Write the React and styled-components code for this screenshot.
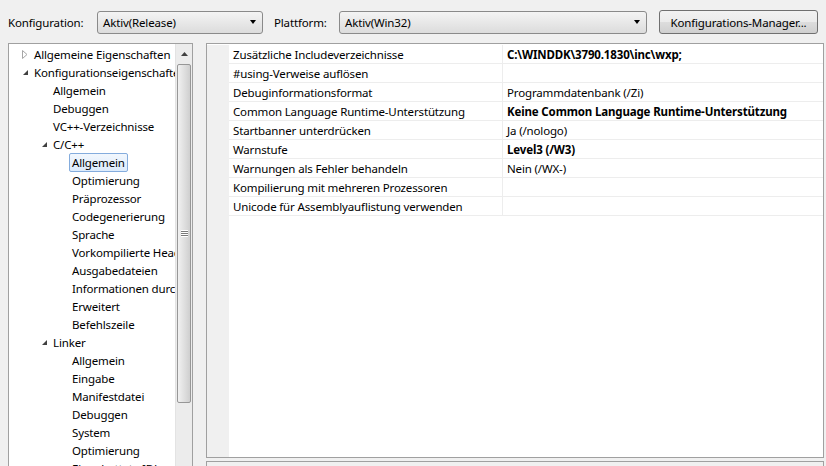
import React from 'react';
import styled, { createGlobalStyle } from 'styled-components';

const GlobalStyle = createGlobalStyle`
  html, body {
    margin: 0;
    padding: 0;
    background: #f0f0f0;
  }
  body {
    font-family: "Noto Sans", "Open Sans", sans-serif;
    font-size: 11.5px;
    letter-spacing: -0.15px;
    color: #000;
  }
`;

const Window = styled.div`
  width: 826px;
  height: 466px;
  overflow: hidden;
  background: #f0f0f0;
  display: flex;
  flex-direction: column;
`;

const Toolbar = styled.div`
  flex: none;
  height: 43px;
  display: flex;
  align-items: center;
  padding: 1px 8px 0;
  box-sizing: border-box;
`;

const Label = styled.span`
  width: ${(p) => p.w}px;
  flex: none;
  white-space: nowrap;
`;

const Combo = styled.div`
  width: ${(p) => p.w}px;
  height: 23px;
  box-sizing: border-box;
  border: 1px solid #8a8a8a;
  border-radius: 3px;
  background: linear-gradient(#f4f4f4, #e8e8e8 50%, #dcdcdc);
  display: flex;
  align-items: center;
  padding: 0 6px 0 5px;
  margin-right: ${(p) => p.gap}px;
`;

const ComboText = styled.span`
  flex: 1;
`;

const Arrow = styled.span`
  width: 0;
  height: 0;
  border-left: 3.5px solid transparent;
  border-right: 3.5px solid transparent;
  border-top: 4px solid #000;
`;

const Button = styled.div`
  width: 159px;
  height: 24px;
  box-sizing: border-box;
  border: 1px solid #707070;
  border-radius: 3px;
  background: linear-gradient(#f2f2f2, #ebebeb 50%, #dddddd 51%, #cfcfcf);
  display: flex;
  align-items: center;
  justify-content: center;
  margin-left: auto;
`;

const Body = styled.div`
  flex: 1;
  min-height: 0;
  display: flex;
  padding-left: 8px;
  gap: 13px;
`;

const TreePanel = styled.div`
  width: 185px;
  height: 423px;
  box-sizing: border-box;
  border: 1px solid #a0a0a0;
  border-bottom: none;
  background: #fff;
  display: flex;
`;

const TreeList = styled.div`
  flex: 1;
  overflow: hidden;
  padding-top: 1px;
`;

const TreeRow = styled.div`
  height: 18px;
  display: flex;
  align-items: center;
  padding-left: ${(p) => 13 + p.level * 19}px;
  white-space: nowrap;
`;

const Toggle = styled.span`
  width: 12px;
  flex: none;
  display: flex;
  align-items: center;
`;

const TreeText = styled.span`
  padding: 0 2px;
  margin-left: -3px;
  line-height: 17px;
  border: 1px solid ${(p) => (p.selected ? '#84acdd' : 'transparent')};
  border-radius: 2px;
  background: ${(p) => (p.selected ? 'linear-gradient(#f2f7fd, #dcebfc)' : 'transparent')};
`;

const ScrollBar = styled.div`
  width: 16px;
  flex: none;
  background: #ececec;
  border-left: 1px solid #e3e3e3;
  display: flex;
  flex-direction: column;
`;

const ScrollBtn = styled.div`
  height: 19px;
  display: flex;
  align-items: center;
  justify-content: center;
`;

const Thumb = styled.div`
  height: 339px;
  margin: 1px 1px 0;
  box-sizing: border-box;
  border: 1px solid #979797;
  border-radius: 2px;
  background: linear-gradient(90deg, #f1f1f1, #e0e0e0 50%, #cfcfcf);
  display: flex;
  align-items: center;
  justify-content: center;
`;

const Grip = styled.div`
  width: 7px;
  height: 7px;
  background: repeating-linear-gradient(#fff 0 1px, #7a7a7a 1px 2px);
`;

const RightCol = styled.div`
  display: flex;
  flex-direction: column;
`;

const GridPanel = styled.div`
  width: 618px;
  height: 416px;
  box-sizing: border-box;
  border: 1px solid #a0a0a0;
  background: #fff;
  display: flex;
  flex-direction: column;
  padding-top: 1px;
`;

const GridRow = styled.div`
  height: 19px;
  flex: none;
  display: grid;
  grid-template-columns: 22px 274px 1fr;
`;

const Gutter = styled.div`
  background: #f0f0f0;
`;

const Cell = styled.div`
  display: flex;
  align-items: center;
  padding-left: 4px;
  border-bottom: 1px solid #ededed;
  border-right: ${(p) => (p.name ? '1px solid #ededed' : 'none')};
  font-weight: ${(p) => (p.bold ? 700 : 400)};
  white-space: nowrap;
  overflow: hidden;
`;

const GridFill = styled.div`
  flex: 1;
  display: grid;
  grid-template-columns: 22px 1fr;
`;

const BottomBar = styled.div`
  width: 618px;
  height: 5px;
  margin-top: 3px;
  border-top: 1px solid #a0a0a0;
  border-left: 1px solid #a0a0a0;
  border-right: 1px solid #a0a0a0;
  box-sizing: border-box;
`;

const tree = [
  { t: 'Allgemeine Eigenschaften', l: 0, tog: 'closed' },
  { t: 'Konfigurationseigenschaften', l: 0, tog: 'open' },
  { t: 'Allgemein', l: 1 },
  { t: 'Debuggen', l: 1 },
  { t: 'VC++-Verzeichnisse', l: 1 },
  { t: 'C/C++', l: 1, tog: 'open' },
  { t: 'Allgemein', l: 2, sel: true },
  { t: 'Optimierung', l: 2 },
  { t: 'Präprozessor', l: 2 },
  { t: 'Codegenerierung', l: 2 },
  { t: 'Sprache', l: 2 },
  { t: 'Vorkompilierte Header', l: 2 },
  { t: 'Ausgabedateien', l: 2 },
  { t: 'Informationen durchsuchen', l: 2 },
  { t: 'Erweitert', l: 2 },
  { t: 'Befehlszeile', l: 2 },
  { t: 'Linker', l: 1, tog: 'open' },
  { t: 'Allgemein', l: 2 },
  { t: 'Eingabe', l: 2 },
  { t: 'Manifestdatei', l: 2 },
  { t: 'Debuggen', l: 2 },
  { t: 'System', l: 2 },
  { t: 'Optimierung', l: 2 },
  { t: 'Eingebettete IDL', l: 2 },
];

const props = [
  ['Zusätzliche Includeverzeichnisse', 'C:\\WINDDK\\3790.1830\\inc\\wxp;', true],
  ['#using-Verweise auflösen', '', false],
  ['Debuginformationsformat', 'Programmdatenbank (/Zi)', false],
  ['Common Language Runtime-Unterstützung', 'Keine Common Language Runtime-Unterstützung', true],
  ['Startbanner unterdrücken', 'Ja (/nologo)', false],
  ['Warnstufe', 'Level3 (/W3)', true],
  ['Warnungen als Fehler behandeln', 'Nein (/WX-)', false],
  ['Kompilierung mit mehreren Prozessoren', '', false],
  ['Unicode für Assemblyauflistung verwenden', '', false],
];

const ToggleIcon = ({ kind }) => {
  if (kind === 'closed') {
    return (
      <svg width="6" height="9" viewBox="0 0 6 9">
        <path d="M0.5 0.5 L5 4.5 L0.5 8.5 Z" fill="#fff" stroke="#a6a6a6" />
      </svg>
    );
  }
  return (
    <svg width="7" height="7" viewBox="0 0 7 7">
      <path d="M6 1 L6 6 L1 6 Z" fill="#404040" />
    </svg>
  );
};

const App = () => {
  return (
    <Window>
      <GlobalStyle />
      <Toolbar>
        <Label w={89}>Konfiguration:</Label>
        <Combo w={166} gap={11}>
          <ComboText>Aktiv(Release)</ComboText>
          <Arrow />
        </Combo>
        <Label w={65}>Plattform:</Label>
        <Combo w={308} gap={12}>
          <ComboText>Aktiv(Win32)</ComboText>
          <Arrow />
        </Combo>
        <Button>Konfigurations-Manager...</Button>
      </Toolbar>
      <Body>
        <TreePanel>
          <TreeList>
            {tree.map((n, i) => (
              <TreeRow key={i} level={n.l}>
                <Toggle>{n.tog && <ToggleIcon kind={n.tog} />}</Toggle>
                <TreeText selected={n.sel}>{n.t}</TreeText>
              </TreeRow>
            ))}
          </TreeList>
          <ScrollBar>
            <ScrollBtn>
              <svg width="7" height="4" viewBox="0 0 7 4">
                <path d="M0 4 L3.5 0 L7 4 Z" fill="#404040" />
              </svg>
            </ScrollBtn>
            <Thumb>
              <Grip />
            </Thumb>
          </ScrollBar>
        </TreePanel>
        <RightCol>
          <GridPanel>
            {props.map(([name, value, bold], i) => (
              <GridRow key={i}>
                <Gutter />
                <Cell name>{name}</Cell>
                <Cell bold={bold}>{value}</Cell>
              </GridRow>
            ))}
            <GridFill>
              <Gutter />
              <div />
            </GridFill>
          </GridPanel>
          <BottomBar />
        </RightCol>
      </Body>
    </Window>
  );
};

export default App;
